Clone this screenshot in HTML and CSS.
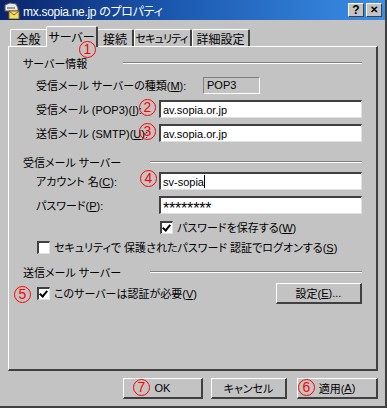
FILE: index.html
```html
<!DOCTYPE html>
<html lang="ja">
<head>
    <meta charset="UTF-8">
    <title>mx.sopia.ne.jp のプロパティ</title>
    <link rel="stylesheet" href="styles.css">
</head>
<body>
    <div class="window">
        <div class="titlebar">
            <svg class="title-icon" width="17" height="17" viewBox="0 0 17 17">
                <path d="M2 3 L7 1 L13 2 L15 6 L15 9 L2 9 Z" fill="#e8e8e8" stroke="#606060" stroke-width="1"/>
                <rect x="4" y="5" width="8" height="2" fill="#9a9a9a"/>
                <rect x="6" y="9" width="10" height="8" fill="#f4e060" stroke="#806020" stroke-width="1"/>
                <path d="M6 9 L11 13 L16 9" fill="none" stroke="#806020" stroke-width="1"/>
            </svg>
            <span class="title-text">mx.sopia.ne.jp のプロパティ</span>
            <span class="title-btn">?</span>
            <span class="title-btn close">✕</span>
        </div>

        <div class="tabs">
            <div class="tab w-general">全般</div>
            <div class="tab active">サーバー</div>
            <div class="tab w-conn">接続</div>
            <div class="tab w-sec">セキュリティ</div>
            <div class="tab w-adv">詳細設定</div>
        </div>

        <div class="panel">
            <div class="group-head first">
                <span>サーバー情報</span>
                <span class="rule"></span>
            </div>
            <div class="field-row row-type">
                <label>受信メール サーバーの種類(<u>M</u>):</label>
                <span class="static-box">POP3</span>
            </div>
            <div class="field-row">
                <label>受信メール (POP3)(<u>I</u>):</label>
                <span class="input">av.sopia.or.jp</span>
            </div>
            <div class="field-row">
                <label>送信メール (SMTP)(<u>U</u>):</label>
                <span class="input">av.sopia.or.jp</span>
            </div>

            <div class="group-head second">
                <span>受信メール サーバー</span>
                <span class="rule"></span>
            </div>
            <div class="field-row">
                <label>アカウント 名(<u>C</u>):</label>
                <span class="input">sv-sopia<span class="caret"></span></span>
            </div>
            <div class="field-row">
                <label>パスワード(<u>P</u>):</label>
                <span class="input stars">********</span>
            </div>
            <div class="check-row save-pw">
                <span class="checkbox checked"></span>
                <span>パスワードを保存する(<u>W</u>)</span>
            </div>
            <div class="check-row indent">
                <span class="checkbox"></span>
                <span>セキュリティで 保護されたパスワード 認証でログオンする(<u>S</u>)</span>
            </div>

            <div class="group-head third">
                <span>送信メール サーバー</span>
                <span class="rule"></span>
            </div>
            <div class="check-row indent auth-row">
                <span class="checkbox checked"></span>
                <span class="auth-text">このサーバーは認証が必要(<u>V</u>)</span>
                <span class="button setting">設定(<u>E</u>)...</span>
            </div>
        </div>

        <div class="footer">
            <span class="button b-ok">OK</span>
            <span class="button b-cancel">キャンセル</span>
            <span class="button b-apply">適用(<u>A</u>)</span>
        </div>

        <!-- 赤丸の番号 -->
        <span class="mark m1">1</span>
        <span class="mark m2">2</span>
        <span class="mark m3">3</span>
        <span class="mark m4">4</span>
        <span class="mark m5">5</span>
        <span class="mark m6">6</span>
        <span class="mark m7">7</span>
    </div>
</body>
</html>
```

FILE: styles.css
```css
body {
    margin: 0;
    font-family: "Liberation Sans", "Noto Sans CJK JP", sans-serif;
    font-size: 11px;
    font-feature-settings: "palt";
    color: #000;
    white-space: nowrap;
}
u {
    text-decoration: underline;
    text-underline-offset: 1px;
}
.window {
    position: relative;
    width: 385px;
    height: 406px;
    background: #c3c3c3;
    border-right: 2px solid #404040;
    border-bottom: 2px solid #404040;
}
.titlebar {
    display: flex;
    align-items: center;
    height: 20px;
    padding: 0 3px 0 3px;
    background: linear-gradient(to right, #0a246a, #1c58b0 45%, #3a8ee6);
    color: #fff;
}
.title-icon {
    margin-right: 3px;
}
.title-text {
    flex: 1;
    font-size: 12px;
    letter-spacing: -0.3px;
}
.title-btn {
    display: flex;
    align-items: center;
    justify-content: center;
    width: 14px;
    height: 12px;
    margin-left: 2px;
    background: #c3c3c3;
    color: #000;
    font-weight: bold;
    font-size: 12px;
    line-height: 1;
    border-top: 1px solid #fff;
    border-left: 1px solid #fff;
    border-right: 1px solid #404040;
    border-bottom: 1px solid #404040;
}
.title-btn.close {
    font-size: 10px;
}
.tabs {
    display: flex;
    align-items: flex-end;
    height: 21px;
    margin-top: 5px;
    padding-left: 10px;
    position: relative;
    z-index: 1;
}
.tab {
    display: flex;
    align-items: center;
    justify-content: center;
    height: 17px;
    border-top: 1px solid #fff;
    border-left: 1px solid #fff;
    border-right: 2px solid #404040;
    border-top-left-radius: 2px;
    border-top-right-radius: 2px;
    box-sizing: border-box;
    font-size: 12px;
}
.w-general { width: 38px; }
.w-conn { width: 37px; }
.w-sec {
    width: 58px;
    padding-right: 2px;
    font-size: 11px;
    letter-spacing: -0.8px;
}
.w-adv { width: 58px; }
.tab.active {
    width: 52px;
    height: 21px;
    margin: 0 -1px 0 -2px;
    background: #c3c3c3;
    padding-bottom: 2px;
    position: relative;
    top: 1px;
}
.panel {
    width: 370px;
    height: 325px;
    margin-left: 8px;
    box-sizing: border-box;
    padding: 0 14px 0 14px;
    border-top: 1px solid #fff;
    border-left: 1px solid #fff;
    border-right: 2px solid #404040;
    border-bottom: 2px solid #404040;
}
.group-head {
    display: flex;
    align-items: center;
    height: 14px;
}
.group-head.first { margin-top: 9px; }
.group-head.second { margin-top: 10px; }
.group-head.third { margin-top: 8px; }
.rule {
    flex: 1;
    border-top: 1px solid #808080;
    border-bottom: 1px solid #fff;
    margin-left: 29px;
}
.group-head.first .rule { margin-left: 36px; }
.field-row {
    display: flex;
    align-items: center;
    height: 24px;
    padding-left: 13px;
}
.field-row label {
    width: 123px;
    flex-shrink: 0;
}
.row-type { margin-top: 3px; }
.static-box {
    display: flex;
    align-items: center;
    width: 57px;
    height: 17px;
    margin-left: 44px;
    padding-left: 3px;
    box-sizing: border-box;
    border-top: 1px solid #808080;
    border-left: 1px solid #808080;
    border-right: 1px solid #fff;
    border-bottom: 1px solid #fff;
}
.input {
    display: flex;
    align-items: center;
    flex: 1;
    height: 18px;
    padding-left: 2px;
    box-sizing: border-box;
    background: #fff;
    border-top: 2px solid #404040;
    border-left: 2px solid #404040;
    border-right: 1px solid #e0e0e0;
    border-bottom: 1px solid #e0e0e0;
}
.stars {
    font-size: 16px;
    letter-spacing: -0.2px;
    padding-top: 7px;
}
.caret {
    display: inline-block;
    width: 1px;
    height: 13px;
    background: #000;
}
.check-row {
    display: flex;
    align-items: center;
    height: 20px;
    gap: 4px;
}
.indent { padding-left: 14px; }
.save-pw { padding-left: 137px; }
.checkbox {
    width: 13px;
    height: 13px;
    box-sizing: border-box;
    background: #fff;
    border-top: 2px solid #404040;
    border-left: 2px solid #404040;
    border-right: 1px solid #e0e0e0;
    border-bottom: 1px solid #e0e0e0;
    position: relative;
    flex-shrink: 0;
}
.checkbox.checked::after {
    content: "";
    position: absolute;
    left: 2px;
    top: 0px;
    width: 3px;
    height: 6px;
    border-right: 2px solid #000;
    border-bottom: 2px solid #000;
    transform: rotate(40deg);
}
.auth-row {
    height: 24px;
    margin-top: 2px;
}
.auth-text { flex: 1; }
.button {
    display: flex;
    align-items: center;
    justify-content: center;
    height: 21px;
    box-sizing: border-box;
    background: #c3c3c3;
    border-top: 1px solid #fff;
    border-left: 1px solid #fff;
    border-right: 2px solid #404040;
    border-bottom: 2px solid #404040;
}
.setting { width: 86px; }
.footer {
    display: flex;
    justify-content: flex-end;
    gap: 8px;
    margin-top: 7px;
    padding-right: 7px;
}
.b-ok { width: 80px; }
.b-cancel { width: 76px; }
.b-apply { width: 81px; margin-left: 2px; }
.mark {
    position: absolute;
    width: 15px;
    height: 15px;
    border: 1px solid #f00;
    border-radius: 50%;
    color: #f00;
    font-size: 14px;
    line-height: 15px;
    text-align: center;
    z-index: 2;
}
.m1 { left: 79px; top: 41px; }
.m2 { left: 139px; top: 99px; }
.m3 { left: 139px; top: 123px; }
.m4 { left: 140px; top: 170px; }
.m5 { left: 14px; top: 286px; }
.m6 { left: 298px; top: 379px; }
.m7 { left: 133px; top: 379px; }
```
